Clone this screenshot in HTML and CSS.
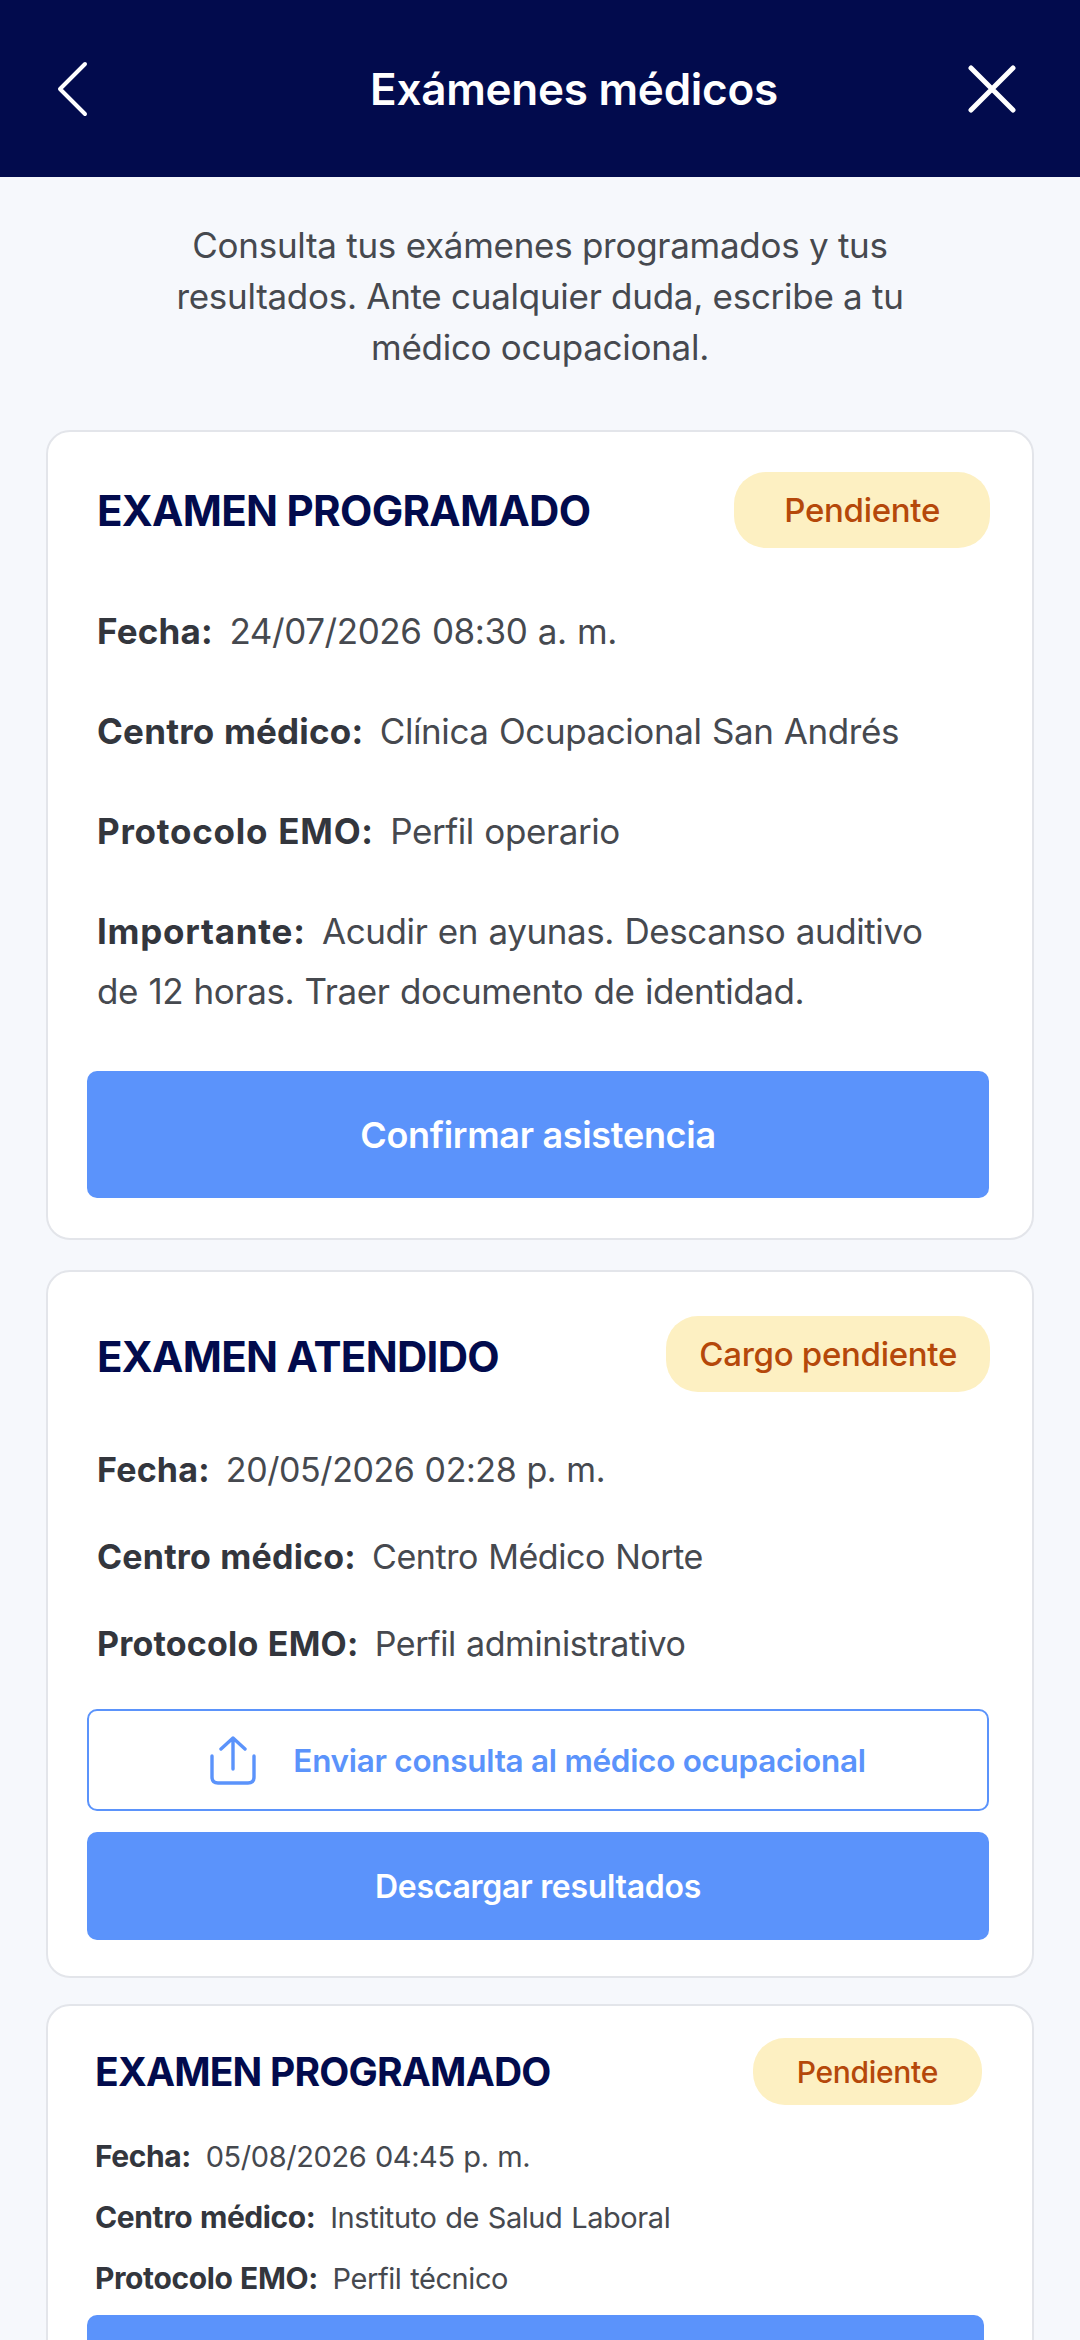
FILE: index.html
```html
<!DOCTYPE html>
<html lang="es">
<head>
<meta charset="utf-8">
<title>Exámenes médicos</title>
<link rel="stylesheet" href="styles.css">
</head>
<body>
<div class="page">
  <header class="topbar">
    <svg class="icon-back" viewBox="0 0 32 56" width="32" height="56"><path d="M29 3 L4 28 L29 53" fill="none" stroke="#fff" stroke-width="4" stroke-linecap="round" stroke-linejoin="round"/></svg>
    <h1 class="topbar-title">Exámenes médicos</h1>
    <svg class="icon-close" viewBox="0 0 48 48" width="48" height="48"><path d="M3 3 L45 45 M45 3 L3 45" fill="none" stroke="#fff" stroke-width="5" stroke-linecap="round"/></svg>
  </header>
  <p class="intro">Consulta tus exámenes programados y tus resultados. Ante cualquier duda, escribe a tu médico ocupacional.</p>

  <section class="card card-a">
    <div class="card-head">
      <h2 class="card-title">EXAMEN PROGRAMADO</h2>
      <span class="badge">Pendiente</span>
    </div>
    <p class="row"><b>Fecha:</b> 24/07/2026 08:30 a. m.</p>
    <p class="row"><b>Centro médico:</b> Clínica Ocupacional San Andrés</p>
    <p class="row row-wide"><b>Protocolo EMO:</b> Perfil operario</p>
    <p class="row row-wide row-multi"><b>Importante:</b> Acudir en ayunas. Descanso auditivo de 12 horas. Traer documento de identidad.</p>
    <button class="btn btn-primary btn-large">Confirmar asistencia</button>
  </section>

  <section class="card card-b">
    <div class="card-head">
      <h2 class="card-title">EXAMEN ATENDIDO</h2>
      <span class="badge">Cargo pendiente</span>
    </div>
    <p class="row"><b>Fecha:</b> 20/05/2026 02:28 p. m.</p>
    <p class="row"><b>Centro médico:</b> Centro Médico Norte</p>
    <p class="row"><b>Protocolo EMO:</b> Perfil administrativo</p>
    <button class="btn btn-outline">
      <svg class="icon-share" viewBox="0 0 46 50" width="46" height="50"><path d="M23 34 V3 M11 14 L23 3 L35 14 M2 21 V42 Q2 48 8 48 H38 Q44 48 44 42 V21" fill="none" stroke="#5b93fb" stroke-width="3.4" stroke-linecap="round" stroke-linejoin="round"/></svg>
      <span>Enviar consulta al médico ocupacional</span>
    </button>
    <button class="btn btn-primary btn-medium">Descargar resultados</button>
  </section>

  <section class="card card-c">
    <div class="card-head">
      <h2 class="card-title">EXAMEN PROGRAMADO</h2>
      <span class="badge">Pendiente</span>
    </div>
    <p class="row"><b>Fecha:</b> 05/08/2026 04:45 p. m.</p>
    <p class="row"><b>Centro médico:</b> Instituto de Salud Laboral</p>
    <p class="row"><b>Protocolo EMO:</b> Perfil técnico</p>
    <button class="btn btn-primary btn-large"></button>
  </section>
</div>
</body>
</html>
```
FILE: styles.css
```css
* { box-sizing: border-box; }
html, body { margin: 0; padding: 0; }
body { background: #f6f8fc; font-family: Inter, "Noto Sans", sans-serif; color: #3a3d45; }
.page { width: 1080px; height: 2340px; overflow: hidden; display: flex; flex-direction: column; }
.topbar { flex: none; height: 177px; background: #020b4d; display: flex; align-items: center; justify-content: space-between; padding: 0 64px 0 56px; }
.topbar-title { margin: 0 0 0 92px; font-size: 44px; font-weight: 600; color: #fff; letter-spacing: -0.25px; }
.intro { flex: none; margin: 43px auto 57px; width: 780px; text-align: center; font-size: 35px; line-height: 51px; font-weight: 400; color: #46494f; letter-spacing: -0.28px; }
.card { flex: none; width: 988px; margin: 0 0 30px 46px; background: #fff; border: 2px solid #e3e5ea; border-radius: 24px; padding: 40px 42px 40px 39px; }
.card-head { display: flex; justify-content: space-between; align-items: center; padding-left: 10px; }
.card-title { margin: 0; font-size: 42px; font-weight: 700; color: #020b4d; letter-spacing: -0.7px; }
.badge { background: #fdf0c2; color: #b5480a; font-size: 33px; font-weight: 500; border-radius: 32px; height: 76px; display: flex; align-items: center; padding: 0 50px; letter-spacing: -0.3px; }
.row { margin: 0; padding-left: 10px; font-size: 35px; line-height: 60px; letter-spacing: -0.42px; color: #46494f; word-spacing: 1px; }
.row b { font-weight: 700; color: #33363d; margin-right: 6px; letter-spacing: 0.2px; }
.row-wide b { letter-spacing: 0.75px; }
.btn { display: flex; align-items: center; justify-content: center; width: 902px; border: 0; border-radius: 10px; font-family: inherit; font-weight: 600; letter-spacing: -0.3px; }
.btn-primary { background: #5b93fb; color: #fff; }
.btn-large { height: 127px; font-size: 36px; }
.btn-medium { height: 108px; font-size: 32px; margin-top: 21px; }
.btn-outline { height: 102px; background: #fff; border: 2.5px solid #5b93fb; color: #5b93fb; font-size: 31.5px; gap: 37px; }
.card-a .card-head { margin-bottom: 53px; }
.card-a .row + .row { margin-top: 40px; }
.card-a .row-multi { margin-bottom: 50px; padding-right: 30px; }
.card-b { padding-top: 44px; padding-bottom: 36px; margin-bottom: 26px; }
.card-b .card-head { margin-bottom: 48px; }
.card-b .card-title { padding-top: 5px; }
.card-b .badge { padding: 0 33px; }
.card-b .row { font-size: 34px; }
.card-b .row + .row { margin-top: 27px; }
.card-b .btn-outline { margin-top: 35px; }
.card-c { padding-top: 32px; margin-bottom: 0; }
.card-c .card-head { padding-left: 8px; padding-right: 8px; margin-bottom: 26px; }
.card-c .card-title { font-size: 39px; letter-spacing: -0.8px; }
.card-c .badge { height: 67px; font-size: 30px; padding: 0 44px; }
.card-c .row { font-size: 29px; line-height: 50px; padding-left: 8px; }
.card-c .row b { font-size: 30px; letter-spacing: -0.4px; }
.card-c .row + .row { margin-top: 10px; }
.card-c .btn { margin-top: 11px; width: 897px; }
```
